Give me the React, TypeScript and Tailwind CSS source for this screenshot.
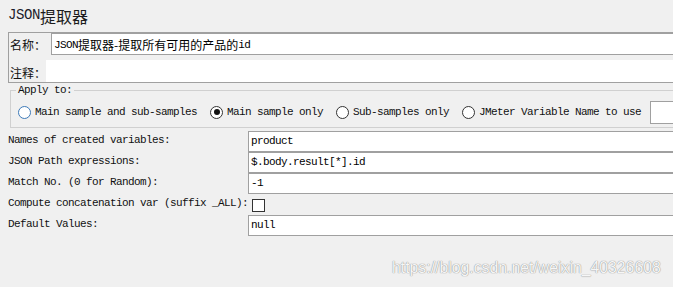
import React from "react";

const mono = "font-['Liberation_Mono',monospace] text-[11px] tracking-[-0.6px] text-[#111]";
const cjk = "font-['Noto_Sans_CJK_SC',sans-serif] text-[12px] text-[#111]";

function Radio({ checked, hover }: { checked?: boolean; hover?: boolean }) {
  return (
    <span
      className={`flex h-[13px] w-[13px] shrink-0 items-center justify-center rounded-full border bg-white ${
        hover ? "border-[#3d7ab8]" : "border-[#333]"
      }`}
    >
      {checked ? <span className="h-[6px] w-[6px] rounded-full bg-[#111]" /> : null}
    </span>
  );
}

function RadioItem({ label, checked, hover, first }: { label: string; checked?: boolean; hover?: boolean; first?: boolean }) {
  return (
    <div className={`flex items-center gap-[4px] ${first ? "" : "ml-[13px]"}`}>
      <Radio checked={checked} hover={hover} />
      <span className={`${mono} whitespace-nowrap leading-[13px]`}>{label}</span>
    </div>
  );
}

function FieldRow({ label, value }: { label: string; value: string }) {
  return (
    <div className="flex h-[21px]">
      <div className={`${mono} flex w-[248px] shrink-0 items-center whitespace-nowrap pb-[2px] pl-[8px]`}>{label}</div>
      <div className="flex flex-1 items-center border-y border-l border-[#a0a0a0] bg-white pl-[2px]">
        <span className={`${mono} whitespace-nowrap text-black`}>{value}</span>
      </div>
    </div>
  );
}

export default function App() {
  return (
    <div className="relative h-[287px] w-[673px] overflow-hidden bg-[#f0f0f0]">
      {/* Title */}
      <div className="flex h-[32px] items-center pl-[8px] pb-[1px]">
        <span className="font-['Liberation_Mono',monospace] text-[14px] tracking-[-0.4px] text-[#1c1c2c]">JSON</span>
        <span className="font-['Noto_Sans_CJK_SC',sans-serif] text-[16px] text-[#1c1c1c]">提取器</span>
      </div>

      {/* Name / Comment panel */}
      <div className="ml-[8px] h-[51px] border-y border-l border-[#a0a0a0]">
        <div className="flex h-[22px]">
          <div className={`${cjk} flex w-[42px] shrink-0 items-center pl-[1px] pt-[2px]`}>名称：</div>
          <div className="flex flex-1 items-center border-y border-l border-[#a0a0a0] bg-white pl-[2px] pt-[2px]">
            <span className={`${mono} text-black`}>JSON</span>
            <span className={`${cjk} text-black`}>提取器-提取所有可用的产品的</span>
            <span className={`${mono} text-black`}>id</span>
          </div>
        </div>
        <div className="mt-[5px] flex h-[22px]">
          <div className={`${cjk} flex w-[37px] shrink-0 items-center pl-[1px] pt-[4px]`}>注释：</div>
          <div className="flex-1 bg-white" />
        </div>
      </div>

      {/* Apply to group */}
      <div className="relative ml-[10px] mt-[7px] h-[38px] border-y border-l border-[#d0d0d0]">
        <span className={`${mono} absolute -top-[8px] left-[5px] bg-[#f0f0f0] px-[2px] leading-[14px]`}>Apply to:</span>
        <div className="mt-[10px] flex h-[22px] items-center pl-[7px]">
          <RadioItem first hover label="Main sample and sub-samples" />
          <RadioItem checked label="Main sample only" />
          <RadioItem label="Sub-samples only" />
          <RadioItem label="JMeter Variable Name to use" />
          <div className="ml-[9px] h-[23px] flex-1 border-y border-l border-[#a0a0a0] bg-white" />
        </div>
      </div>

      {/* Fields */}
      <div className="mt-[3px] flex flex-col">
        <FieldRow label="Names of created variables:" value="product" />
        <FieldRow label="JSON Path expressions:" value="$.body.result[*].id" />
        <FieldRow label="Match No. (0 for Random):" value="-1" />
        <div className="flex h-[21px]">
          <div className={`${mono} flex w-[248px] shrink-0 items-center whitespace-nowrap pb-[2px] pl-[8px]`}>
            Compute concatenation var (suffix _ALL):
          </div>
          <div className="flex flex-1 items-center pl-[4px] pt-[1px]">
            <span className="h-[13px] w-[13px] border border-[#333] bg-white" />
          </div>
        </div>
        <FieldRow label="Default Values:" value="null" />
      </div>

      {/* Watermark */}
      <div className="absolute left-[392px] top-[258px] whitespace-nowrap font-['Liberation_Sans',Arial,sans-serif] text-[15.8px] leading-[20px] text-[#f6f6f6] [text-shadow:0_0_1px_#8a8a8a,0_0_1px_#a8a8a8]">
        https://blog.csdn.net/weixin_40326608
      </div>
    </div>
  );
}
